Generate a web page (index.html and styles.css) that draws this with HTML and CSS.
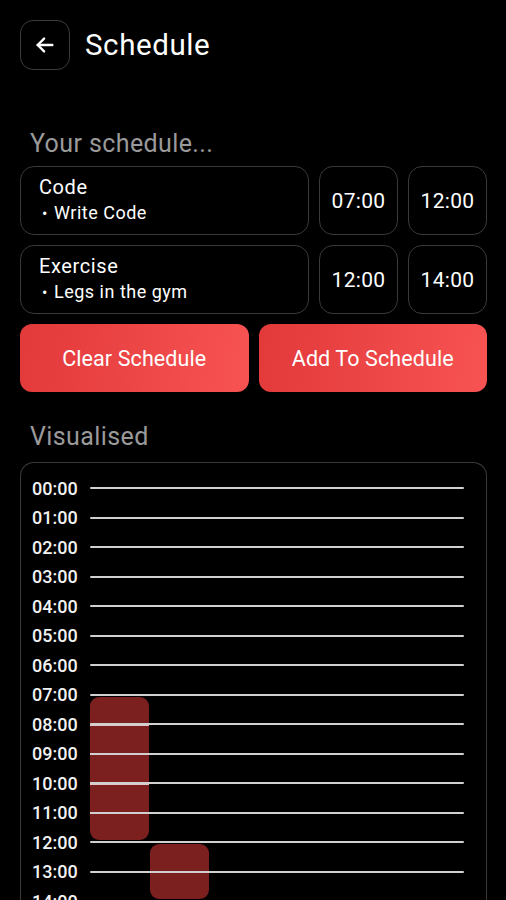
FILE: index.html
```html
<!DOCTYPE html>
<html lang="en">

<head>
  <meta charset="UTF-8" />
  <meta name="viewport" content="width=device-width, initial-scale=1.0" />
  <title>Schedule</title>
  <link rel="stylesheet" href="styles.css">
</head>

<body>
  <div class="page-wrap">
    <div class="top-bar">
      <button class="back-btn" aria-label="Back">
        <svg width="22" height="22" viewBox="0 0 24 24" fill="none" stroke="#fff" stroke-width="2.6" stroke-linecap="round" stroke-linejoin="round">
          <path d="M20 12H4" />
          <path d="M11 5l-7 7 7 7" />
        </svg>
      </button>
      <h1>Schedule</h1>
    </div>

    <h3 class="section-title first">Your schedule...</h3>
    <div id="scheduleList"></div>

    <div class="actions">
      <button class="red-btn">Clear Schedule</button>
      <button class="red-btn">Add To Schedule</button>
    </div>

    <h3 class="section-title">Visualised</h3>
    <div class="visual-box">
      <div class="timeline" id="timeline">
        <div class="blocks" id="blocks"></div>
      </div>
    </div>
  </div>

  <script>
    const items = [
      { name: "Code", note: "Write Code", start: 7, end: 12 },
      { name: "Exercise", note: "Legs in the gym", start: 12, end: 14 }
    ];

    const pad = (n) => String(n).padStart(2, '0') + ':00';

    // schedule rows
    const list = document.getElementById('scheduleList');
    items.forEach(item => {
      const row = document.createElement('div');
      row.className = 'sched-row';
      row.innerHTML = `
        <div class="task-box">
          <div class="task-name">${item.name}</div>
          <div class="task-note"><span class="dot">&bull;</span>${item.note}</div>
        </div>
        <div class="time-box">${pad(item.start)}</div>
        <div class="time-box">${pad(item.end)}</div>
      `;
      list.appendChild(row);
    });

    // blocks go first so the hour lines paint over them
    const ROW_H = 29.5;
    const blocks = document.getElementById('blocks');
    items.forEach((item, i) => {
      const block = document.createElement('div');
      block.className = 'block';
      block.style.top = (ROW_H / 2 + ROW_H * item.start + 2) + 'px';
      block.style.height = (ROW_H * (item.end - item.start) - 4) + 'px';
      block.style.left = (58 + i * 60) + 'px';
      blocks.appendChild(block);
    });

    // hour rows
    const timeline = document.getElementById('timeline');
    for (let h = 0; h < 24; h++) {
      const row = document.createElement('div');
      row.className = 'hour-row';
      row.innerHTML = `<span class="hour-label">${pad(h)}</span><span class="hour-line"></span>`;
      timeline.appendChild(row);
    }
  </script>
</body>

</html>
```

FILE: styles.css
```css
body {
  margin: 0;
  background-color: #000;
  color: #fff;
  font-family: Roboto, 'Noto Sans', sans-serif;
}

.page-wrap {
  padding: 20px 19px 20px 20px;
}

.top-bar {
  display: flex;
  align-items: center;
  gap: 15px;
  height: 50px;
}

.back-btn {
  width: 50px;
  height: 50px;
  border: 1.5px solid #3c3c3c;
  border-radius: 13px;
  background: #000;
  display: flex;
  align-items: center;
  justify-content: center;
  padding: 0;
}

h1 {
  margin: 0;
  font-size: 29.5px;
  font-weight: 400;
  letter-spacing: 0.6px;
}

.section-title {
  margin: 30px 0 10px;
  padding-left: 10px;
  font-size: 25px;
  line-height: 30px;
  font-weight: 400;
  letter-spacing: 0.4px;
  color: #9a9a9a;
}

.section-title.first {
  margin-top: 59px;
  margin-bottom: 7px;
}

.sched-row {
  display: flex;
  gap: 10px;
  height: 69px;
  margin-bottom: 10px;
}

.task-box,
.time-box {
  box-sizing: border-box;
  border: 1.5px solid #3a3a3a;
  border-radius: 14px;
}

.task-box {
  flex: 1;
  padding: 7px 0 0 18px;
}

.task-name {
  font-size: 20px;
  line-height: 26px;
  letter-spacing: 0.6px;
}

.task-note {
  font-size: 18px;
  line-height: 26px;
  letter-spacing: 0.5px;
  padding-left: 3px;
}

.dot {
  display: inline-block;
  width: 12px;
  font-size: 16px;
}

.time-box {
  width: 79px;
  display: flex;
  align-items: center;
  justify-content: center;
  font-size: 21px;
  letter-spacing: 0.3px;
}

.actions {
  display: flex;
  gap: 10px;
}

.red-btn {
  flex: 1;
  height: 68px;
  border: none;
  border-radius: 12px;
  background: linear-gradient(100deg, #e2393a, #f85353);
  color: #fff;
  font-family: inherit;
  font-size: 21.5px;
  letter-spacing: 0.1px;
}

.visual-box {
  border: 1.5px solid #3a3a3a;
  border-bottom: none;
  border-radius: 14px 14px 0 0;
  padding: 10.5px 22px 0 11px;
  min-height: 740px;
}

.timeline {
  position: relative;
}

.blocks {
  position: absolute;
  inset: 0;
}

.hour-row {
  position: relative;
  display: flex;
  align-items: center;
  height: 29.5px;
}

.hour-label {
  width: 58px;
  font-size: 18px;
  font-weight: 500;
  color: #f2f2f2;
}

.hour-line {
  flex: 1;
  height: 2px;
  background-color: #d0d0d0;
  border-radius: 1px;
}

.block {
  position: absolute;
  width: 59px;
  background-color: #7b1f1f;
  background-image: repeating-linear-gradient(to bottom,
      transparent 0, transparent 26.5px,
      #e0c8c8 26.5px, #e0c8c8 28.5px,
      transparent 28.5px, transparent 29.5px);
  border-radius: 9px;
}
```
